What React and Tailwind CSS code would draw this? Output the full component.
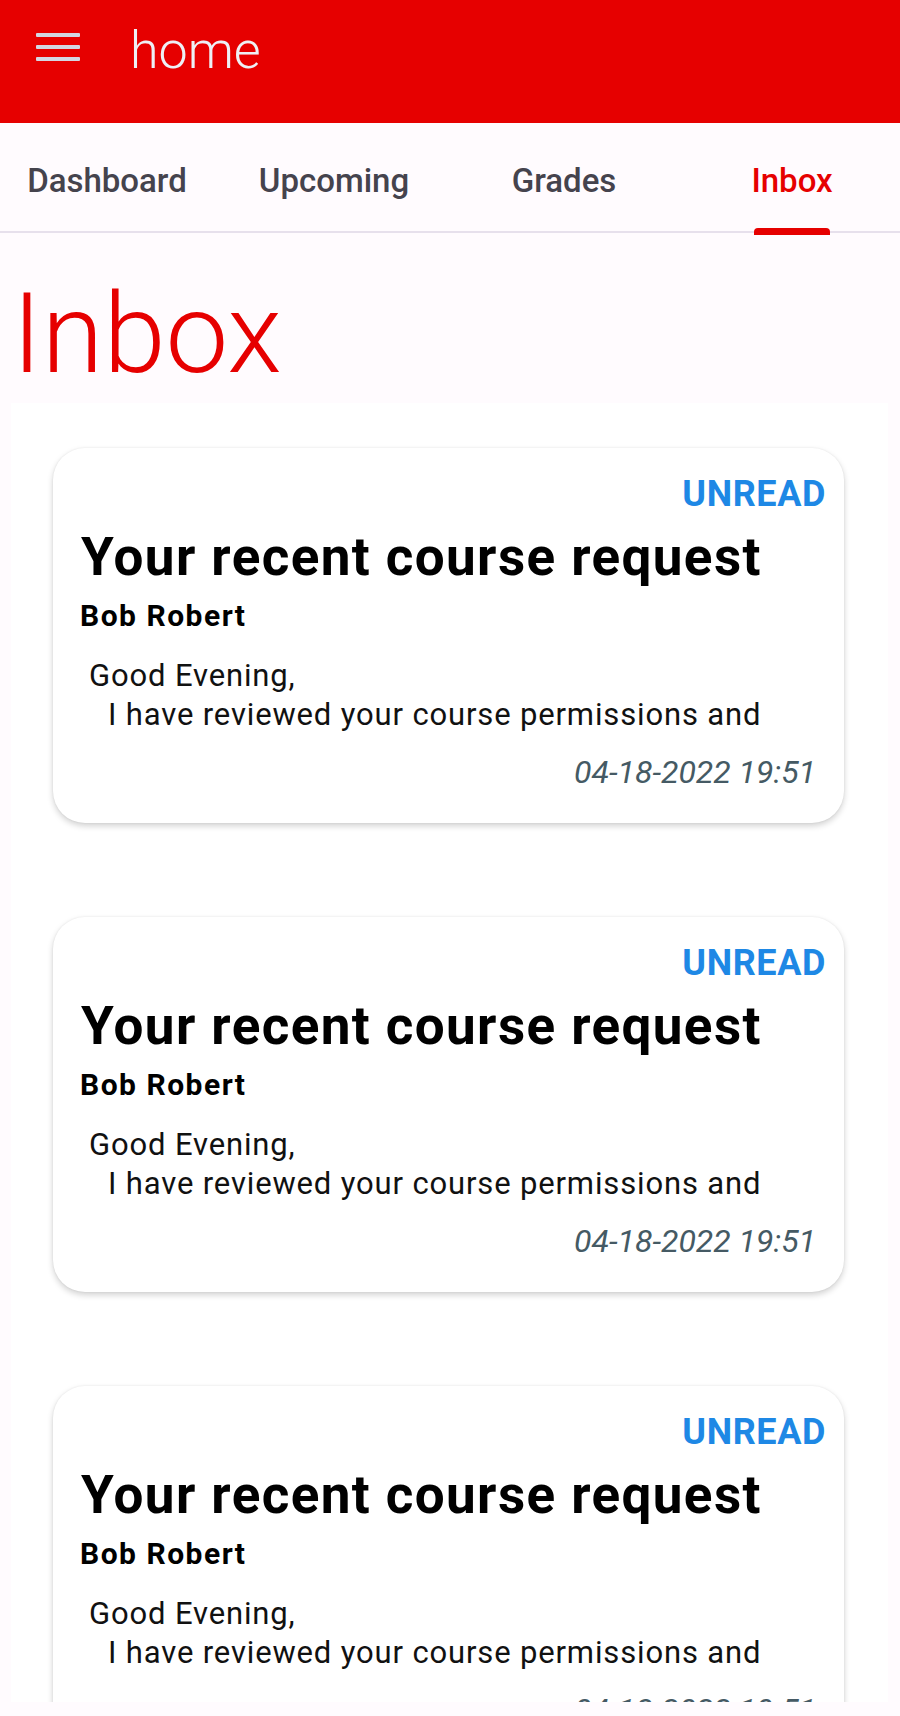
import React from "react";

const font = { fontFamily: "Roboto, 'Noto Sans', sans-serif" };

function Card() {
  return (
    <div className="h-[375px] shrink-0 rounded-[32px] bg-white pt-[28px] shadow-[0_3px_6px_rgba(0,0,0,0.18),0_0_2px_rgba(0,0,0,0.08)]">
      <div className="h-[36px] pr-[18px] text-right text-[36px] font-bold leading-[36px] tracking-[0.6px] text-[#1e88e5]">
        UNREAD
      </div>
      <div className="mt-[19px] h-[53px] whitespace-nowrap pl-[28px] text-[53px] font-bold leading-[53px] tracking-[1.4px] text-black">
        Your recent course request
      </div>
      <div className="mt-[17px] h-[30px] pl-[27px] text-[30px] font-bold leading-[30px] tracking-[1.5px] text-black">
        Bob Robert
      </div>
      <div className="mt-[25px] text-[31px] leading-[39px] tracking-[0.85px] text-[#111]">
        <div className="pl-[36px]">Good Evening,</div>
        <div className="whitespace-nowrap pl-[55px]">I have reviewed your course permissions and</div>
      </div>
      <div className="mt-[22px] h-[32px] pr-[28px] text-right text-[32px] italic leading-[32px] text-[#455a64]">
        04-18-2022 19:51
      </div>
    </div>
  );
}

export default function App() {
  const tabs = [
    { label: "Dashboard", cls: "w-[214px]", active: false },
    { label: "Upcoming", cls: "w-[240px]", active: false },
    { label: "Grades", cls: "w-[220px]", active: false },
    { label: "Inbox", cls: "w-[226px] pl-[10px]", active: true },
  ];
  return (
    <div style={font} className="flex h-[1716px] w-[900px] flex-col overflow-hidden bg-[#fffbfe]">
      {/* App bar */}
      <div className="flex h-[123px] shrink-0 items-start bg-[#e60000] pt-[25px]">
        <div className="ml-[36px] mt-[8px] flex w-[44px] flex-col gap-[8px]">
          <div className="h-[4px] rounded-[1px] bg-[#d3d6e2]" />
          <div className="h-[4px] rounded-[1px] bg-[#d3d6e2]" />
          <div className="h-[4px] rounded-[1px] bg-[#d3d6e2]" />
        </div>
        <div className="ml-[50px] text-[52px] font-light leading-[52px] text-[#eef0f5]">home</div>
      </div>

      {/* Tabs */}
      <div className="flex h-[110px] shrink-0 border-b-[2px] border-[#e7e0ec] bg-[#fffbfe]">
        {tabs.map((t) => (
          <div key={t.label} className={`flex h-full ${t.cls}`}>
            <div className="relative flex h-full flex-1 items-center justify-center pt-[7px]">
              <span
                className={`text-[33px] font-medium leading-[33px] ${
                  t.active ? "text-[#e60000]" : "text-[#45434d]"
                }`}
              >
                {t.label}
              </span>
              {t.active && (
                <div className="absolute bottom-[-4px] left-1/2 h-[7px] w-[76px] -translate-x-1/2 rounded-t-[4px] bg-[#e60000]" />
              )}
            </div>
          </div>
        ))}
      </div>

      {/* Heading */}
      <div className="mt-[45px] h-[112px] shrink-0 pl-[12px] text-[112px] font-light leading-[112px] text-[#e60000]">
        Inbox
      </div>

      {/* List panel */}
      <div className="ml-[11px] mr-[12px] mt-[13px] flex h-[1299px] shrink-0 flex-col gap-[94px] overflow-hidden bg-white pl-[42px] pr-[44px] pt-[45px]">
        <Card />
        <Card />
        <Card />
      </div>
    </div>
  );
}
